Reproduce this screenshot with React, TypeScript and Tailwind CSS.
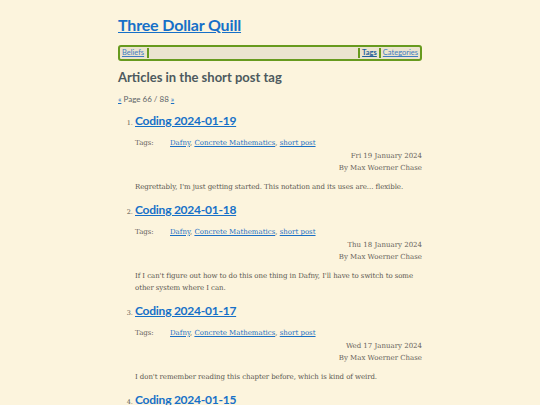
import React from 'react';

const sans = "font-['Lato','Open_Sans',sans-serif]";
const serif = "font-['DejaVu_Serif','Liberation_Serif',serif]";

const posts = [
  {
    title: 'Coding 2024-01-19',
    date: 'Fri 19 January 2024',
    excerpt: "Regrettably, I'm just getting started. This notation and its uses are... flexible.",
  },
  {
    title: 'Coding 2024-01-18',
    date: 'Thu 18 January 2024',
    excerpt: "If I can't figure out how to do this one thing in Dafny, I'll have to switch to some other system where I can.",
  },
  {
    title: 'Coding 2024-01-17',
    date: 'Wed 17 January 2024',
    excerpt: "I don't remember reading this chapter before, which is kind of weird.",
  },
  {
    title: 'Coding 2024-01-15',
    date: 'Mon 15 January 2024',
    excerpt: 'More notes.',
  },
];

function Tags() {
  return (
    <div className={`flex mt-[8px] text-[7px] leading-[12px] ${serif}`}>
      <span className="w-[35px] text-[#66625a]">Tags:</span>
      <span className="text-[#66625a]">
        <a href="#" className="text-[#1a6fc4] underline">Dafny</a>,{' '}
        <a href="#" className="text-[#1a6fc4] underline">Concrete Mathematics</a>,{' '}
        <a href="#" className="text-[#1a6fc4] underline">short post</a>
      </span>
    </div>
  );
}

export default function App() {
  return (
    <div className="h-[405px] bg-[#fcf4dd] overflow-hidden">
      <div className="w-[304px] mx-auto pt-[14px]">
        <h1 className={`text-[16px] leading-[22px] font-bold tracking-[-0.01em] ${sans}`}>
          <a href="#" className="text-[#1670c8] underline">Three Dollar Quill</a>
        </h1>

        {/* nav */}
        <nav className={`mt-[9px] h-[16px] flex items-center rounded-[3px] border-2 border-[#679a1e] bg-[#ebe4cf] text-[7.5px] ${sans}`}>
          <a href="#" className="pl-[2px] pr-[3px] border-r-2 border-[#679a1e] text-[#3f7cc0] underline leading-[10px]">Beliefs</a>
          <div className="flex-1" />
          <a href="#" className="px-[2px] border-l-2 border-[#679a1e] text-[#1f5f9c] font-bold underline leading-[10px]">Tags</a>
          <a href="#" className="px-[2px] border-l-2 border-[#679a1e] text-[#3f7cc0] underline leading-[10px]">Categories</a>
        </nav>

        <h2 className={`mt-[8px] text-[13px] leading-[16px] font-bold text-[#4d5a5e] ${sans}`}>
          Articles in the short post tag
        </h2>

        <p className={`mt-[9px] text-[8px] leading-[10px] text-[#5d6468] ${sans}`}>
          <a href="#" className="text-[#1a6fc4] underline">«</a> Page 66 / 88{' '}
          <a href="#" className="text-[#1a6fc4] underline">»</a>
        </p>

        <ol className="mt-[9px] pl-[17px] list-decimal">
          {posts.map((p, i) => (
            <li key={p.title} className={`${i > 0 ? 'mt-[9px]' : ''} text-[#5a5750] text-[6.5px] ${serif} marker:text-[#5a5750]`}>
              <h3 className={`text-[12px] leading-[16px] font-bold tracking-[-0.02em] ${sans}`}>
                <a href="#" className="text-[#1670c8] underline">{p.title}</a>
              </h3>
              <Tags />
              <div className={`mt-[1px] text-right text-[7px] leading-[12px] text-[#66625a] ${serif}`}>
                <div>{p.date}</div>
                <div>By Max Woerner Chase</div>
              </div>
              <p className={`mt-[7px] text-[7px] leading-[12px] tracking-[-0.01em] text-[#5a5750] ${serif}`}>{p.excerpt}</p>
            </li>
          ))}
        </ol>
      </div>
    </div>
  );
}
